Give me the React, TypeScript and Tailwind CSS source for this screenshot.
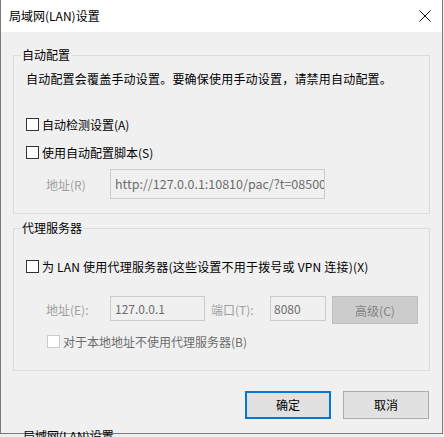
import React from "react";

const font = { fontFamily: '"Noto Sans CJK SC", "Microsoft YaHei", sans-serif' };

function Box({ disabled = false }: { disabled?: boolean }) {
  return (
    <span
      className={
        "inline-block w-[13px] h-[13px] border shrink-0 " +
        (disabled ? "border-[#cccccc] bg-white" : "border-[#333333] bg-white")
      }
    />
  );
}

function Group({
  title,
  className,
  children,
}: {
  title: string;
  className: string;
  children: React.ReactNode;
}) {
  return (
    <div className={"relative mx-[12px] border border-[#dcdcdc] " + className}>
      <span className="absolute left-[7px] top-[-10px] px-[1px] bg-[#f0f0f0] text-[12px] leading-[18px] text-black">
        {title}
      </span>
      {children}
    </div>
  );
}

export default function App() {
  return (
    <div
      className="relative w-[444px] h-[437px] bg-[#f0f0f0] overflow-hidden text-[12px] text-black"
      style={font}
    >
      <div className="flex flex-col w-[443px] h-[434px] border-l border-r border-b border-[#7a7a7a] bg-[#f0f0f0]">
        <div className="h-[32px] bg-white flex items-center justify-between pl-[8px] pr-[10px]">
          <span className="text-[12px] leading-[16px]">局域网(LAN)设置</span>
          <svg width="12" height="12" viewBox="0 0 12 12" className="mr-[1px]">
            <path d="M0.5 0.5 L11.5 11.5 M11.5 0.5 L0.5 11.5" stroke="#111" strokeWidth="1" fill="none" />
          </svg>
        </div>

        <div className="flex flex-col pt-[23px]">
          <Group title="自动配置" className="h-[159px]">
            <div className="flex flex-col pl-[12px]">
              <div className="mt-[14px] leading-[17px] tracking-[0.2px]">自动配置会覆盖手动设置。要确保使用手动设置，请禁用自动配置。</div>
              <div className="mt-[31px] flex items-center h-[13px] gap-[3px]">
                <Box />
                <span className="leading-[16px]">自动检测设置(A)</span>
              </div>
              <div className="mt-[15px] flex items-center h-[13px] gap-[3px]">
                <Box />
                <span className="leading-[16px]">使用自动配置脚本(S)</span>
              </div>
              <div className="mt-[10px] flex items-center h-[30px]">
                <span className="ml-[20px] w-[64px] text-[#a0a0a0] leading-[16px] pt-[1px]">地址(R)</span>
                <div className="w-[215px] h-[30px] border border-[#cccccc] bg-[#f0f0f0] overflow-hidden whitespace-nowrap pl-[4px] flex items-center text-[12.5px] text-[#6d6d6d]">
                  http://127.0.0.1:10810/pac/?t=085004
                </div>
              </div>
            </div>
          </Group>

          <Group title="代理服务器" className="h-[143px] mt-[14px]">
            <div className="flex flex-col pl-[12px]">
              <div className="mt-[31px] flex items-center h-[13px] gap-[3px]">
                <Box />
                <span className="leading-[16px] tracking-[0.2px]">为 LAN 使用代理服务器(这些设置不用于拨号或 VPN 连接)(X)</span>
              </div>
              <div className="mt-[23px] flex items-start h-[28px]">
                <span className="ml-[20px] w-[64px] h-[25px] flex items-center pt-[3px] text-[#a0a0a0]">地址(E):</span>
                <div className="w-[95px] h-[25px] border border-[#cccccc] bg-[#f0f0f0] pl-[4px] flex items-center text-[#6d6d6d]">
                  127.0.0.1
                </div>
                <span className="ml-[6px] w-[59px] h-[25px] flex items-center pt-[3px] text-[#a0a0a0]">端口(T):</span>
                <div className="w-[56px] h-[25px] border border-[#cccccc] bg-[#f0f0f0] pl-[3px] flex items-center text-[#6d6d6d]">
                  8080
                </div>
                <div className="ml-[6px] w-[86px] h-[28px] border border-[#bfbfbf] bg-[#cccccc] flex items-center justify-center pt-[1px] text-[#838383]">
                  高级(C)
                </div>
              </div>
              <div className="mt-[11px] ml-[21px] flex items-center h-[13px] gap-[3px]">
                <Box disabled />
                <span className="leading-[16px] text-[#6d6d6d]">对于本地地址不使用代理服务器(B)</span>
              </div>
            </div>
          </Group>

          <div className="mt-[20px] flex justify-end gap-[12px] pr-[13px]">
            <div className="w-[86px] h-[28px] border-2 border-[#0078d7] bg-[#e1e1e1] flex items-center justify-center">
              确定
            </div>
            <div className="w-[86px] h-[28px] border border-[#adadad] bg-[#e1e1e1] flex items-center justify-center">
              取消
            </div>
          </div>
        </div>
      </div>
      <span className="absolute left-[23px] top-[428px] text-[12px] leading-[16px] text-black">局域网(LAN)设置</span>
    </div>
  );
}
